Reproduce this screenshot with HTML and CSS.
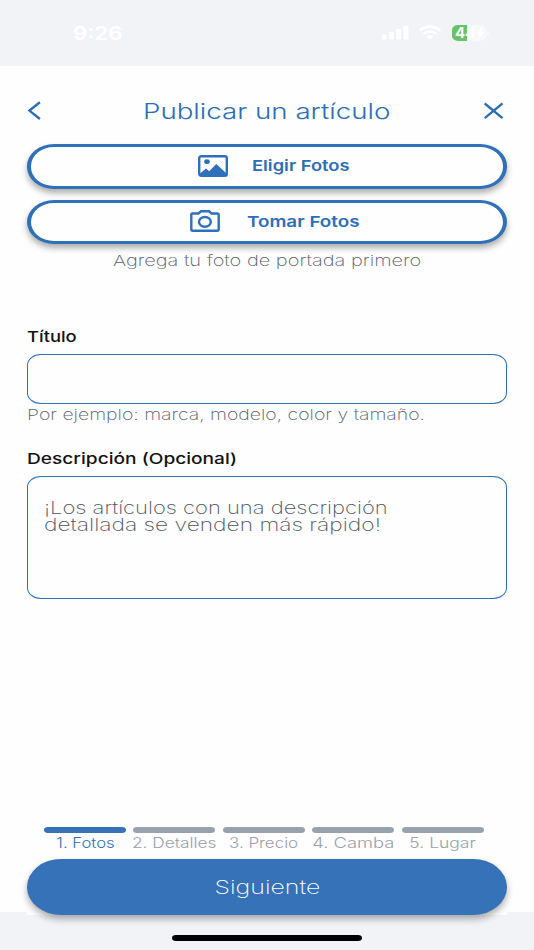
FILE: index.html
```html
<!DOCTYPE html>
<html lang="es">
<head>
<meta charset="utf-8">
<title>Publicar un artículo</title>
<link rel="stylesheet" href="styles.css">
</head>
<body>
<div class="screen">
  <div class="status">
    <span class="time"><span class="t t-time">9:26</span></span>
    <div class="indicators">
      <svg class="signal" width="28" height="16" viewBox="0 0 28 16"><rect x="1" y="9.5" width="4.5" height="5" rx="1.3"/><rect x="8" y="7" width="4.8" height="7.5" rx="1.3"/><rect x="15.2" y="4" width="4.8" height="10.5" rx="1.3"/><rect x="22.5" y="1" width="5" height="13.5" rx="1.3"/></svg>
      <svg class="wifi" width="24" height="16" viewBox="0 0 24 16"><path d="M1.5 5.5Q12-2.5 22.5 5.5"/><path d="M5.3 9Q12 4 18.7 9"/><path class="dot" d="M8.5 11.3Q12 8.7 15.5 11.3L12 14.5Z"/></svg>
      <div class="battery"><span class="charge"><span class="t t-bat">44</span></span><svg class="bolt" width="8" height="12" viewBox="0 0 8 12"><path d="M5.5 0L0 7H3.5L2.5 12L8 5H4.5Z"/></svg></div>
      <span class="tip"></span>
    </div>
  </div>

  <header class="header">
    <svg class="back" width="14" height="20" viewBox="0 0 14 20"><path d="M12.9 1.2L2.4 9.6L12.9 18"/></svg>
    <h1><span class="t t-title">Publicar un artículo</span></h1>
    <svg class="close" width="20" height="18" viewBox="0 0 20 18"><path d="M.7 1.4L18.5 16.2M18.5 1.4L.7 16.2"/></svg>
  </header>

  <main>
    <button class="photo choose">
      <svg width="30" height="22" viewBox="0 0 30 22"><rect x="1.2" y="1.2" width="27.6" height="19.6" rx="2"/><ellipse class="fill" cx="9" cy="6.7" rx="2.8" ry="2.4"/><path class="fill" d="M2 20.5V18.5L8 13.5L11.2 16.3L18.3 9L28 18V20.5Z"/></svg>
      <span class="slot"><span class="t t-choose">Eligir Fotos</span></span>
    </button>
    <button class="photo take">
      <svg width="30" height="22" viewBox="0 0 30 22"><path d="M2.7 3.5H8.5L11 1.3H19L21.5 3.5H27.3Q28.7 3.5 28.7 4.9V19.3Q28.7 20.7 27.3 20.7H2.7Q1.3 20.7 1.3 19.3V4.9Q1.3 3.5 2.7 3.5Z"/><ellipse cx="14.9" cy="11.9" rx="5.9" ry="4.9"/></svg>
      <span class="slot"><span class="t t-take">Tomar Fotos</span></span>
    </button>
    <p class="cover"><span class="t t-cover">Agrega tu foto de portada primero</span></p>

    <label class="label"><span class="t t-l1">Título</span></label>
    <div class="field"></div>
    <p class="help"><span class="t t-help">Por ejemplo: marca, modelo, color y tamaño.</span></p>

    <label class="label second"><span class="t t-l2">Descripción (Opcional)</span></label>
    <div class="field area">
      <span class="t t-d1">¡Los artículos con una descripción</span>
      <span class="t t-d2">detallada se venden más rápido!</span>
    </div>
  </main>

  <div class="steps">
    <div class="step active"><span class="t t-s1">1. Fotos</span></div>
    <div class="step"><span class="t t-s2">2. Detalles</span></div>
    <div class="step"><span class="t t-s3">3. Precio</span></div>
    <div class="step"><span class="t t-s4">4. Camba</span></div>
    <div class="step"><span class="t t-s5">5. Lugar</span></div>
  </div>
  <footer>
    <div class="next-wrap"><button class="next"><span class="t t-next">Siguiente</span></button></div>
    <div class="home"></div>
  </footer>
</div>
</body>
</html>
```
FILE: styles.css
```css
* { box-sizing: border-box; }
body { margin: 0; font-family: Inter, "Open Sans", sans-serif; font-weight: 250; background: #fdfdfd; }
h1, p { margin: 0; font-weight: inherit; }
button { font: inherit; padding: 0; }
.screen { width: 534px; height: 950px; display: flex; flex-direction: column; overflow: hidden; background: #fefefe; }

/* Wide lettering: each label is stretched to its own measure */
.t { display: inline-block; white-space: nowrap; transform-origin: left center; }
.t-time { transform: scaleX(1.17); }
.t-bat { transform: scaleX(1.08); }
.t-title { transform: scaleX(1.288); }
.t-choose { transform: scaleX(1.22); }
.t-take { transform: scaleX(1.255); }
.t-cover { transform: scaleX(1.332); }
.t-l1 { transform: scaleX(1.225); }
.t-help { transform: scaleX(1.296); }
.t-l2 { transform: scaleX(1.275); }
.t-d1 { transform: scaleX(1.255); }
.t-d2 { transform: scaleX(1.3); }
.t-s1 { transform: scaleX(1.19); }
.t-s2 { transform: scaleX(1.235); }
.t-s3 { transform: scaleX(1.21); }
.t-s4 { transform: scaleX(1.31); }
.t-s5 { transform: scaleX(1.25); }
.t-next { transform: scaleX(1.31); }

.status { height: 66px; background: #f1f3f7; display: flex; justify-content: space-between; padding: 24px 45px 0 72.5px; color: #fff; }
.time { font-size: 19px; line-height: 19px; font-weight: 600; }
.indicators { display: flex; align-items: flex-start; }
.signal, .wifi .dot { fill: #fff; }
.signal { margin-right: 9px; margin-top: 1px; }
.wifi { fill: none; stroke: #fff; stroke-width: 2.6; margin-right: 10px; margin-top: 1px; }
.wifi .dot { stroke: none; }
.battery { width: 34px; height: 16px; margin-top: 1px; border-radius: 6px / 5px; background: linear-gradient(to right, #65c466 15.5px, #f8f9fb 15.5px); display: flex; align-items: center; padding-left: 3px; }
.charge { width: 21px; font-size: 14px; line-height: 16px; font-weight: 700; }
.bolt { fill: #fff; }
.tip { width: 2px; height: 5px; margin: 7px 0 0 1px; background: #f8f9fb; border-radius: 0 2px 2px 0; }

.header { height: 78px; display: flex; align-items: flex-start; padding: 35px 30px 0 27px; }
.back, .close { fill: none; stroke: #2c6eb5; stroke-width: 2.4; }
.close { margin: 1px 0 0 auto; }
h1 { width: 246px; margin: -4px 0 0 102px; font-size: 21.5px; line-height: 28px; font-weight: 340; color: #2c6eb5; }

main { height: 683px; padding: 0 27px; }
.photo { width: 480px; height: 44.5px; display: flex; align-items: center; border: solid #2f71b8; border-width: 3px 4px; border-radius: 27px / 22px; background: #fefefe; box-shadow: 0 4px 6px rgba(0, 0, 0, .32); color: #2c6eb5; }
.photo svg { fill: none; stroke: #2f71b8; stroke-width: 2.4; }
.photo svg .fill { fill: #2f71b8; stroke: none; }
.photo .slot { margin-left: 24px; font-size: 15px; line-height: 20px; font-weight: 600; }
.choose { padding-left: 167px; }
.take { padding-left: 159px; margin-top: 11px; }
.take svg { margin-top: -2px; }
.take .slot { margin-left: 27px; }
.cover { margin: 7px 0 0 85.5px; font-size: 15px; line-height: 20px; color: #56606c; }
.label { display: block; margin-top: 56px; font-size: 15px; line-height: 20px; font-weight: 500; color: #111; }
.field { height: 50px; margin-top: 7px; border: 1px solid #2f71b8; border-radius: 14px / 11px; }
.help { margin-top: 1px; font-size: 15px; line-height: 20px; color: #56606c; }
.label.second { margin-top: 24px; }
.area { height: 123px; padding: 22px 0 0 16px; display: flex; flex-direction: column; align-items: flex-start; font-size: 17.5px; line-height: 17px; color: #4b5562; }

.steps { display: flex; gap: 7.4px; padding: 0 51px 0 44px; height: 32px; }
.step { width: 82px; flex: none; font-size: 14px; line-height: 20px; font-weight: 300; text-align: center; color: #98a1ad; }
.step::before { content: ""; display: block; height: 6px; border-radius: 4px / 3px; background: #98a1ad; }
.step .t { transform-origin: center; }
.step.active { color: #2f71b8; }
.step.active::before { background: #3572b7; }
footer { height: 91px; background: linear-gradient(to bottom, #fefefe 53px, #f1f3f7 53px); padding: 0 27px; }
.next-wrap { height: 56px; background: #fefefe; }
.next { width: 480px; height: 55.5px; display: block; border: 0; padding-top: 2px; border-radius: 34px / 27.75px; background: #3572b7; color: #fff; font-size: 19px; line-height: 26px; box-shadow: 0 4px 7px rgba(0, 0, 0, .32); }
.next .t { transform-origin: center; }
.home { width: 190px; height: 6px; margin: 20px auto 0; background: #000; border-radius: 4px / 3px; }
```
